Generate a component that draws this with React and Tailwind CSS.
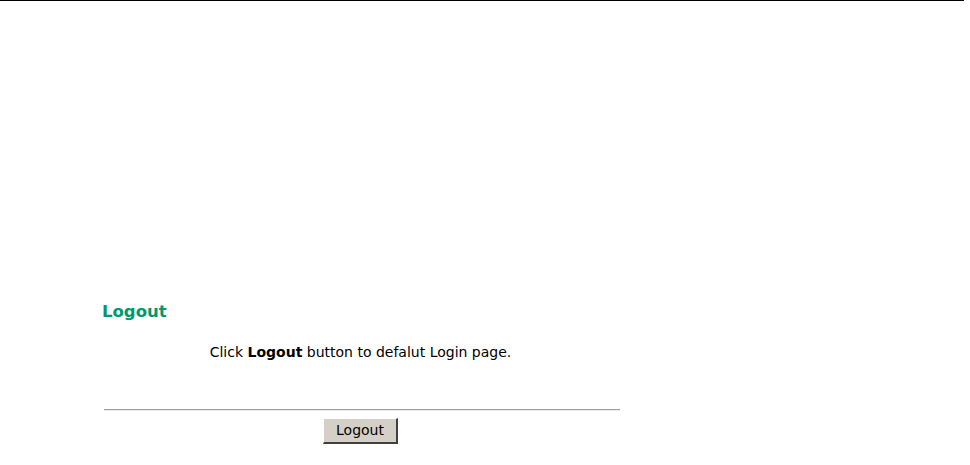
export default function App() {
  return (
    <div className="w-[970px] h-[465px] bg-white overflow-hidden font-['DejaVu_Sans',Verdana,sans-serif]">
      <div className="w-[964px] h-px bg-black" />
      <div className="pl-[102px] pt-[301px]">
        <h1 className="text-[16.5px] leading-[20px] font-bold text-[#00996b]">Logout</h1>
        <div className="w-[518px] pl-[2px]">
          <p className="mt-[22px] pr-[3px] text-center text-[14px] leading-[17px] text-black">
            Click <b>Logout</b> button to defalut Login page.
          </p>
          <div className="mt-[48px] border-t border-t-[#a0a0a0] border-b border-b-[#e8e8e8]" />
          <div className="mt-[7px] pr-[3px] flex justify-center">
            <button className="w-[75px] h-[26px] bg-[#d4d0c8] text-[14px] text-black border-t border-l border-t-white border-l-white border-b-2 border-r-2 border-b-[#404040] border-r-[#404040]">
              Logout
            </button>
          </div>
        </div>
      </div>
    </div>
  );
}
